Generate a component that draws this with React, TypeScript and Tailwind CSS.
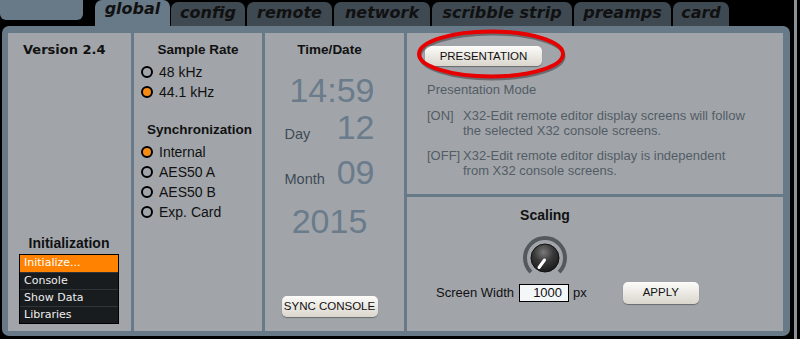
import React from 'react';

const tabs = [
  { label: 'config', w: 'w-[74px]' },
  { label: 'remote', w: 'w-[85px]' },
  { label: 'network', w: 'w-[96px]' },
  { label: 'scribble strip', w: 'w-[140px]' },
  { label: 'preamps', w: 'w-[97px]' },
  { label: 'card', w: 'w-[56px]' },
];

const Radio = ({ label, on }: { label: string; on?: boolean }) => (
  <div className="flex items-center h-[20px]">
    <span
      className={`w-[12px] h-[12px] rounded-full border-2 border-black ${on ? 'bg-[#f78a12]' : ''}`}
    />
    <span className="ml-[6px] text-[14px] leading-[20px] text-[#111]">{label}</span>
  </div>
);

const Btn = ({ children, className }: { children: React.ReactNode; className: string }) => (
  <button
    className={`flex items-center justify-center rounded-[5px] bg-linear-to-b from-[#fdfcfa] to-[#dad6cd] shadow-[0_1px_1px_rgba(0,0,0,0.35)] text-[11.5px] text-[#111] font-['Liberation_Sans',Arial,sans-serif] ${className}`}
  >
    {children}
  </button>
);

const Knob = () => (
  <svg width="46" height="46" viewBox="0 0 46 46">
    <defs>
      <radialGradient id="kg" cx="0.45" cy="0.3" r="0.75">
        <stop offset="0" stopColor="#7a7a7a" />
        <stop offset="0.45" stopColor="#3a3a3a" />
        <stop offset="1" stopColor="#151515" />
      </radialGradient>
    </defs>
    <path d="M 8.86 37.14 A 20 20 0 1 1 37.14 37.14" fill="none" stroke="#54595e" strokeWidth="4" />
    <circle cx="23" cy="23" r="14" fill="url(#kg)" stroke="#111" strokeWidth="1" />
    <line x1="22.5" y1="25" x2="17" y2="32.5" stroke="#fff" strokeWidth="3" strokeLinecap="round" />
  </svg>
);

export default function App() {
  return (
    <div className="w-[800px] h-[339px] bg-black flex overflow-hidden relative font-['Liberation_Sans',Arial,sans-serif]">
      <div className="w-[794px] h-full flex flex-col">
        {/* tab row */}
        <div className="flex h-[26px] items-start font-['DejaVu_Sans',sans-serif] font-bold italic text-[16px] leading-[18px] text-[#111]">
          <div className="w-[83px] h-[20px] bg-[#687987] rounded-b-[6px]" />
          <div className="ml-[12px] w-[75px] h-[26px] bg-[#687987] rounded-t-[7px] flex justify-center">
            <span>global</span>
          </div>
          {tabs.map((t, i) => (
            <div
              key={t.label}
              className={`${t.w} ${i === 0 ? 'ml-[1px]' : 'ml-[2px]'} mt-[2px] h-[24px] pt-[2px] bg-[#3e4951] rounded-t-[7px] flex justify-center`}
            >
              <span>{t.label}</span>
            </div>
          ))}
        </div>

        {/* main panel */}
        <div className="ml-[2px] w-[788px] h-[310px] bg-[#687987] rounded-[7px] pt-[7px] pl-[6px] pr-[7px] pb-[5px]">
          <div className="flex h-full gap-[3px]">
            {/* column 1 */}
            <div className="w-[123px] bg-[#a1a5aa] flex flex-col">
              <div className="pt-[9px] pl-[15px] font-['DejaVu_Sans',sans-serif] font-bold text-[13px] leading-[16px] text-[#111]">
                Version 2.4
              </div>
              <div className="mt-auto mb-[7px] ml-[11px] w-[100px]">
                <div className="text-center font-bold text-[14px] leading-[16px] text-[#111] mb-[3px]">
                  Initialization
                </div>
                <div className="border border-black bg-[#181c1e] font-['DejaVu_Sans',sans-serif] text-[11px] leading-[16px]">
                  <div className="bg-[#ff8200] text-white pl-[4px] h-[17px]">Initialize...</div>
                  <div className="text-[#eee] pl-[4px] h-[17px] border-t border-[#2e3438]">Console</div>
                  <div className="text-[#eee] pl-[4px] h-[17px] border-t border-[#2e3438]">Show Data</div>
                  <div className="text-[#eee] pl-[4px] h-[17px] border-t border-[#2e3438]">Libraries</div>
                </div>
              </div>
            </div>

            {/* column 2 */}
            <div className="w-[128px] bg-[#a1a5aa] pt-[9px]">
              <div className="text-center font-bold text-[13.5px] leading-[16px] text-[#111]">Sample Rate</div>
              <div className="mt-[4px] pl-[7px]">
                <Radio label="48 kHz" />
                <Radio label="44.1 kHz" on />
              </div>
              <div className="mt-[20px] text-center font-bold text-[13.5px] leading-[16px] text-[#111] pl-[3px]">
                Synchronization
              </div>
              <div className="mt-[4px] pl-[7px]">
                <Radio label="Internal" on />
                <Radio label="AES50 A" />
                <Radio label="AES50 B" />
                <Radio label="Exp. Card" />
              </div>
            </div>

            {/* column 3 */}
            <div className="w-[139px] bg-[#a1a5aa] pt-[9px] pr-[10px] flex flex-col items-center">
              <div className="font-bold text-[13.5px] leading-[16px] text-[#111]">Time/Date</div>
              <div className="w-[90px] text-[#6a7b8b] text-[34px] leading-[34px]">
                <div className="mt-[15px] text-right">14:59</div>
                <div className="mt-[3px] flex items-baseline justify-between">
                  <span className="text-[14.5px] text-[#3e4a55]">Day</span>
                  <span>12</span>
                </div>
                <div className="mt-[4px] flex items-baseline justify-between">
                  <span className="text-[14.5px] text-[#3e4a55]">Month</span>
                  <span>09</span>
                </div>
                <div className="mt-[8px] text-center">2015</div>
              </div>
              <Btn className="mt-auto mb-[14px] w-[96px] h-[21px]">SYNC CONSOLE</Btn>
            </div>

            {/* column 4 */}
            <div className="flex-1 flex flex-col gap-[3px]">
              <div className="h-[161px] bg-[#a1a5aa] pt-[13px] pl-[18px] text-[13px] leading-[15px] text-[#535c64]">
                <Btn className="w-[117px] h-[20px]">PRESENTATION</Btn>
                <div className="mt-[16px] ml-[2px]">Presentation Mode</div>
                <div className="mt-[11px] ml-[2px] flex">
                  <span className="w-[36px] shrink-0">[ON]</span>
                  <span>
                    X32-Edit remote editor display screens will follow
                    <br />
                    the selected X32 console screens.
                  </span>
                </div>
                <div className="mt-[10px] ml-[2px] flex">
                  <span className="w-[36px] shrink-0">[OFF]</span>
                  <span>
                    X32-Edit remote editor display is independent
                    <br />
                    from X32 console screens.
                  </span>
                </div>
              </div>
              <div className="flex-1 bg-[#a1a5aa] pt-[9.5px]">
                <div className="w-[276px] flex flex-col items-center">
                  <div className="font-bold text-[14px] leading-[16px] text-[#111]">Scaling</div>
                  <div className="mt-[12px] h-[46px]">
                    <Knob />
                  </div>
                </div>
                <div className="mt-[1px] pl-[29px] flex items-center h-[22px]">
                  <span className="text-[13px] leading-[20px] text-[#111]">Screen Width</span>
                  <div className="ml-[5px] w-[50px] h-[18px] border border-black bg-[#f4f7f8] text-right pr-[6px] text-[13px] leading-[16px] text-[#111]">
                    1000
                  </div>
                  <span className="ml-[4px] text-[13px] leading-[20px] text-[#111]">px</span>
                  <Btn className="ml-[36px] w-[76px] h-[22px]">APPLY</Btn>
                </div>
              </div>
            </div>
          </div>
        </div>
      </div>
      <div className="w-[3px] h-full bg-[#8b9299]" />

      {/* red annotation ellipse */}
      <svg className="absolute left-[414px] top-[28px] pointer-events-none" width="156" height="54" viewBox="0 0 156 54">
        <ellipse cx="78" cy="28.5" rx="72" ry="22.5" fill="none" stroke="rgba(0,0,0,0.35)" strokeWidth="3" />
        <ellipse cx="77" cy="26" rx="72" ry="22.5" fill="none" stroke="#e60000" strokeWidth="4" />
      </svg>
    </div>
  );
}
